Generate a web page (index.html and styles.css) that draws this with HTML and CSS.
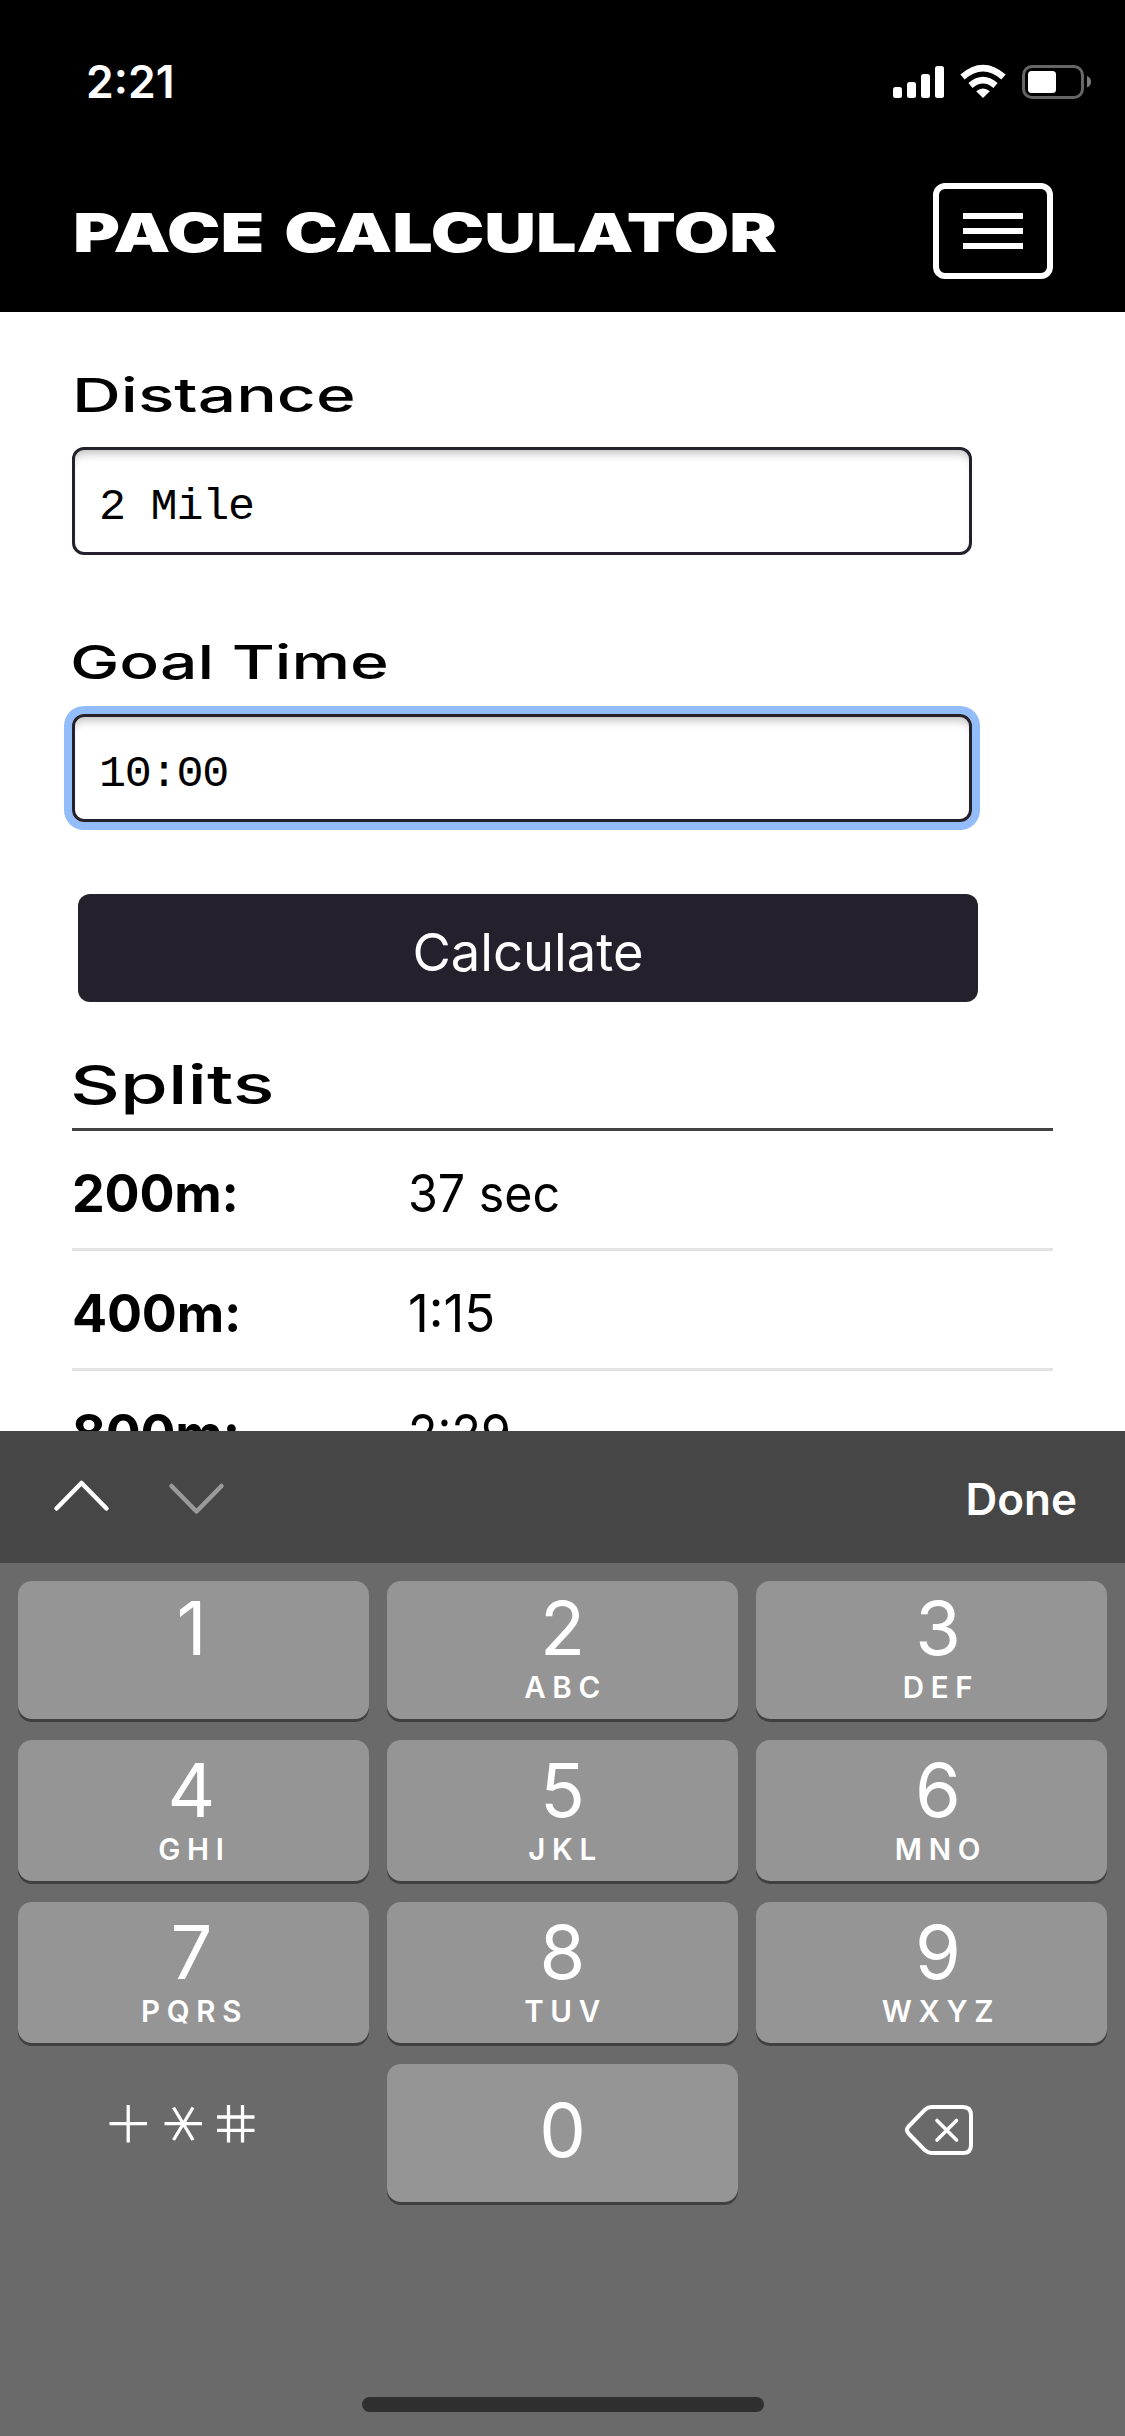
FILE: index.html
```html
<!DOCTYPE html>
<html lang="en">
<head>
<meta charset="utf-8">
<title>Pace Calculator</title>
<link rel="stylesheet" href="styles.css">
</head>
<body>
<div class="screen">
  <header class="top">
    <div class="status">
      <span class="time">2:21</span>
      <svg class="status-icons" width="202" height="40" viewBox="890 62 202 40">
        <g fill="#fff">
          <rect x="893" y="87" width="9" height="11" rx="2.5"/>
          <rect x="907" y="82" width="9" height="16" rx="2.5"/>
          <rect x="921" y="74" width="9" height="24" rx="2.5"/>
          <rect x="935" y="66" width="9" height="32" rx="2.5"/>
          <path d="M983 98 976.2 91.2Q983 85.6 989.8 91.2Z"/>
        </g>
        <g fill="none" stroke="#fff">
          <path d="M970.5 85.5Q983 74.8 995.5 85.5" stroke-width="6.4"/>
          <path d="M962.5 77Q983 59.3 1003.5 77" stroke-width="6.6"/>
        </g>
        <rect x="1023.5" y="66.500" width="59" height="31" rx="8.500" fill="none" stroke="#666" stroke-width="3"/>
        <rect x="1028" y="71" width="28" height="22" rx="3.5" fill="#fff"/>
        <path d="M1087 76Q1091 77.500 1091 81.700T1087 87.500Z" fill="#7a7a7a"/>
      </svg>
    </div>
    <div class="nav">
      <h1 class="brand"><span class="wide wide-brand">PACE CALCULATOR</span></h1>
      <div class="menu"><i></i><i></i><i></i></div>
    </div>
  </header>

  <main class="content">
    <div class="label"><span class="wide wide-distance">Distance</span></div>
    <div class="input">2 Mile</div>
    <div class="label"><span class="wide wide-goal">Goal Time</span></div>
    <div class="input focused">10:00</div>
    <div class="button">Calculate</div>
    <h2 class="splits"><span class="wide wide-splits">Splits</span></h2>
    <div class="row"><b>200m:</b><span class="value">37 sec</span></div>
    <div class="row"><b>400m:</b><span class="value value-wide">1:15</span></div>
    <div class="row"><b>800m:</b><span class="value">2:29</span></div>
  </main>

  <section class="keyboard">
    <div class="toolbar">
      <svg class="arrows" width="180" height="50" viewBox="50 1472 180 50" fill="none" stroke-width="4.500" stroke-linecap="round" stroke-linejoin="round">
        <path d="M56.500 1508.500 81.500 1483 106.500 1508.500" stroke="#fff"/>
        <path d="M171.500 1486 196.500 1511.500 221.500 1486" stroke="#9a9a9a"/>
      </svg>
      <span class="done">Done</span>
    </div>
    <div class="keys">
      <div class="key first left"><span>1</span></div>
      <div class="key first"><span>2</span><small>ABC</small></div>
      <div class="key first right"><span>3</span><small>DEF</small></div>
      <div class="key left"><span>4</span><small>GHI</small></div>
      <div class="key"><span>5</span><small>JKL</small></div>
      <div class="key right"><span>6</span><small>MNO</small></div>
      <div class="key left"><span>7</span><small>PQRS</small></div>
      <div class="key"><span>8</span><small>TUV</small></div>
      <div class="key right"><span>9</span><small>WXYZ</small></div>
      <div class="blank">
        <svg width="351" height="138" viewBox="18 2064 351 138" fill="none" stroke="#fff" stroke-width="3.300">
          <path d="M109.500 2123.700H147M128.200 2105V2142.500M164.500 2123.700H202M173.500 2107.500 193 2140M193 2107.500 173.500 2140M228.500 2105V2142.500M242.500 2105V2142.500M217 2117H254.500M217 2130.400H254.500"/>
        </svg>
      </div>
      <div class="key zero"><span>0</span></div>
      <div class="blank">
        <svg width="351" height="138" viewBox="756 2064 351 138" fill="none" stroke="#fff" stroke-width="4" stroke-linecap="round" stroke-linejoin="round">
          <path d="M931.500 2107H963Q971 2107 971 2115V2145Q971 2153 963 2153H931.500Q928 2153 925 2150.300L908.500 2133.500Q905.500 2130 908.500 2126.500L925 2109.700Q928 2107 931.500 2107Z"/>
          <path d="M937 2120.500 956.500 2140M956.500 2120.500 937 2140" stroke-width="3.600"/>
        </svg>
      </div>
    </div>
    <div class="home"></div>
  </section>
</div>
</body>
</html>
```
FILE: styles.css
```css
* { box-sizing: border-box; }
body { margin: 0; background: #fff; }
.screen {
  width: 1125px; height: 2436px; overflow: hidden;
  display: flex; flex-direction: column;
  font-family: Inter, "Liberation Sans", sans-serif; color: #000;
}
.top { height: 312px; flex: none; background: #000; color: #fff; }
.status {
  height: 164px; padding: 0 33px 0 86px;
  display: flex; align-items: center; justify-content: space-between;
}
.time { font-size: 44.500px; font-weight: 600; }
.status-icons { display: block; }
.nav {
  padding: 19px 72px 0 72px;
  display: flex; align-items: center; justify-content: space-between;
}
.brand { margin: 4px 0 0 1px; font-size: 53px; line-height: 60px; font-weight: 900; }
.wide { display: inline-block; transform-origin: 0 50%; white-space: nowrap; }
.wide-brand { transform: scaleX(1.352); word-spacing: 4px; }
.wide-distance { transform: scaleX(1.44); }
.wide-goal { transform: scaleX(1.405); margin-left: -2px; }
.wide-splits { transform: scaleX(1.435); margin-left: -2px; }
.menu {
  width: 120px; height: 96px; border: 6px solid #fff; border-radius: 12px;
  display: flex; flex-direction: column; align-items: center; justify-content: center; gap: 9px;
}
.menu i { width: 60px; height: 6px; background: #fff; }

.content { height: 1119px; flex: none; overflow: hidden; padding: 52px 72px 0; }
.label { height: 60px; line-height: 61px; font-size: 47px; font-weight: 500; }
.input {
  width: 900px; height: 108px; margin: 23px 0 76px; padding-left: 24px;
  border: 3px solid #24212c; border-radius: 12px;
  box-shadow: inset 0 9px 8px -5px #c4c4c4;
  font: 45px/115px "Liberation Mono", monospace; letter-spacing: -1.200px;
}
.input.focused {
  margin-bottom: 72px;
  box-shadow: inset 0 9px 8px -5px #c4c4c4, 0 0 0 8px #92bdfa;
}
.button {
  width: 900px; height: 108px; margin-left: 6px; border-radius: 12px;
  background: #24212c; color: #fff; text-align: center;
  font-size: 52.500px; line-height: 116px;
}
.splits {
  margin: 48px 0 0; height: 81px; border-bottom: 3px solid #444;
  font-size: 54px; line-height: 70px; font-weight: 500;
}
.row {
  height: 120px; border-bottom: 3px solid #e3e3e3;
  display: flex; font-size: 52px; line-height: 125px;
}
.row b { width: 336px; font-weight: 750; letter-spacing: -.2px; }
.value { display: inline-block; transform-origin: 0 50%; transform: scaleX(.93); }
.value-wide { transform: scaleX(.98); }

.keyboard { flex: 1; background: #6a6a6a; color: #fff; }
.toolbar {
  height: 132px; background: #464646; padding: 0 48px 0 50px;
  display: flex; align-items: center; justify-content: space-between;
}
.done { font-size: 44px; font-weight: 600; padding-top: 3px; }
.keys {
  padding: 18px 18px 0; display: grid;
  grid-template-columns: repeat(3, 351px);
  grid-template-rows: 138px 141px 141px 138px; gap: 21px 18px;
}
.key {
  border-radius: 14px; background: #959595; box-shadow: 0 3px 0 #404040;
  display: flex; flex-direction: column; align-items: center; padding-top: 10px;
}
.key.first { padding-top: 7px; }
.key.left { padding-right: 4px; }
.key.right { padding-left: 13px; }
.key span { font-size: 74px; line-height: 81px; }
.key small {
  font-size: 29.500px; line-height: 36px; font-weight: 600;
  letter-spacing: 6.700px; margin: 0 -6px 0 0;
}
.key.zero { padding-top: 26px; }
.home { width: 402px; height: 15px; margin: 195px auto 0; border-radius: 8px; background: #2f2f2f; }
```
